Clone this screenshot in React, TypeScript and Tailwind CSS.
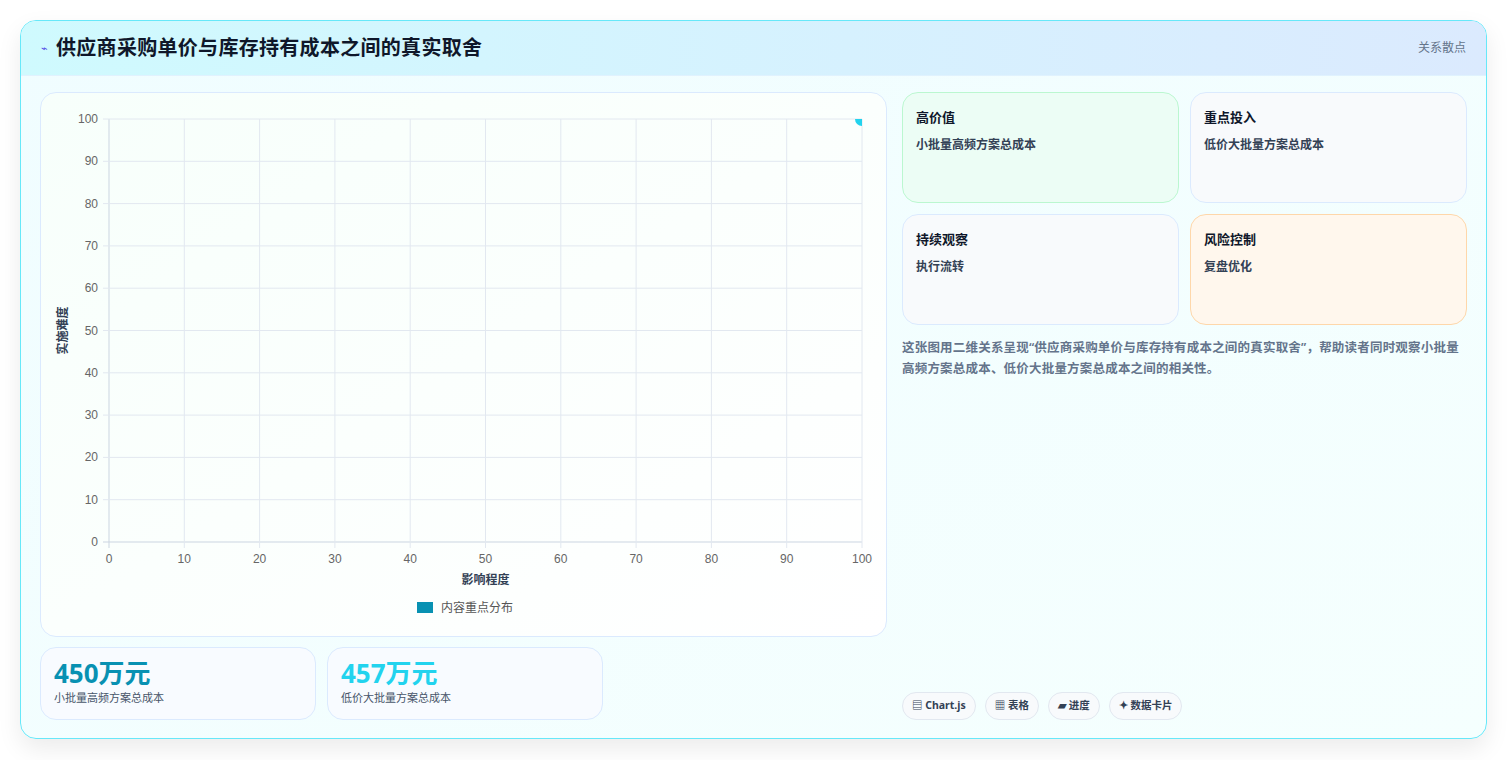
const W = 847;
const H = 543;
const x0 = 68, x1 = 821, y0 = 449, y1 = 26;
const ticks = [0, 10, 20, 30, 40, 50, 60, 70, 80, 90, 100];
const sx = (v: number) => x0 + ((x1 - x0) * v) / 100;
const sy = (v: number) => y0 - ((y0 - y1) * v) / 100;

function Chart() {
  return (
    <svg width={W} height={H} className="block" style={{ fontFamily: "'Liberation Sans', 'Noto Sans CJK SC', sans-serif" }}>
      <defs>
        <clipPath id="plot">
          <rect x={x0} y={y1} width={x1 - x0} height={y0 - y1} />
        </clipPath>
      </defs>
      {ticks.map((t) => (
        <g key={t}>
          <line x1={sx(t)} x2={sx(t)} y1={y1} y2={y0 + 6} stroke={t === 0 ? "#cbd5e1" : "#e2e8f0"} />
          <line x1={x0 - 6} x2={x1} y1={sy(t)} y2={sy(t)} stroke={t === 0 ? "#cbd5e1" : "#e2e8f0"} />
          <text x={sx(t)} y={470} fontSize="12" fill="#666" textAnchor="middle">{t}</text>
          <text x={57} y={sy(t) + 4} fontSize="12" fill="#666" textAnchor="end">{t}</text>
        </g>
      ))}
      <circle cx={sx(100)} cy={sy(100)} r={7} fill="#22d3ee" clipPath="url(#plot)" />
      <text x={(x0 + x1) / 2} y={491} fontSize="12" fontWeight="bold" fill="#334155" textAnchor="middle">影响程度</text>
      <text transform={`translate(26 ${(y0 + y1) / 2}) rotate(-90)`} fontSize="12" fontWeight="bold" fill="#334155" textAnchor="middle">实施难度</text>
      <rect x={376} y={509} width={16} height={11} fill="#0891b2" />
      <text x={400} y={519} fontSize="12" fill="#555">内容重点分布</text>
    </svg>
  );
}

const quads = [
  { t: "高价值", d: "小批量高频方案总成本", c: "bg-[#ecfdf5] border-[#bbf7d0]" },
  { t: "重点投入", d: "低价大批量方案总成本", c: "bg-[#f8fafc] border-[#dbeafe]" },
  { t: "持续观察", d: "执行流转", c: "bg-[#f8fafc] border-[#dbeafe]" },
  { t: "风险控制", d: "复盘优化", c: "bg-[#fff7ed] border-[#fed7aa]" },
];

const chips = ["▤ Chart.js", "▦ 表格", "▰ 进度", "✦ 数据卡片"];

export default function App() {
  return (
    <div className="min-h-[760px] bg-white p-5 pb-0" style={{ fontFamily: "'Noto Sans', 'Noto Sans CJK SC', sans-serif" }}>
      <div className="rounded-2xl border border-[#67e8f9] overflow-hidden bg-gradient-to-br from-[#f0fdff] to-[#f5fffe] shadow-[0_10px_25px_rgba(0,0,0,0.08)]">
        <div className="h-[55px] flex items-center justify-between px-5 bg-gradient-to-r from-[#cffafe] to-[#dbeafe] border-b border-[#e0f2fe]">
          <div className="flex items-center gap-2">
            <span className="text-[11px] text-[#4f46e5]">⌁</span>
            <h1 className="text-[20px] font-bold tracking-[0.3px] text-[#0f172a]">供应商采购单价与库存持有成本之间的真实取舍</h1>
          </div>
          <span className="text-[12px] text-[#64748b]">关系散点</span>
        </div>
        <div className="flex gap-[15px] p-[19px] pt-4 pb-[18px]">
          <div className="w-[847px] flex flex-col gap-[10px]">
            <div className="rounded-2xl border border-[#dbeafe] bg-gradient-to-br from-[#f7fffb] to-white">
              <Chart />
            </div>
            <div className="flex gap-[11px]">
              {[
                { v: "450万元", l: "小批量高频方案总成本", c: "text-[#0891b2]" },
                { v: "457万元", l: "低价大批量方案总成本", c: "text-[#22d3ee]" },
              ].map((s) => (
                <div key={s.v} className="w-[276px] h-[73px] rounded-2xl border border-[#dbeafe] bg-[#f8fbff] px-[13px] pt-[9px]">
                  <div className={`text-[26px] font-bold leading-[32px] ${s.c}`}>{s.v}</div>
                  <div className="text-[11px] text-[#475569] mt-[1px]">{s.l}</div>
                </div>
              ))}
            </div>
          </div>
          <div className="flex-1 flex flex-col">
            <div className="grid grid-cols-2 gap-[11px]">
              {quads.map((q) => (
                <div key={q.t} className={`h-[111px] rounded-2xl border px-[13px] pt-[15px] ${q.c}`}>
                  <div className="text-[13px] font-bold text-[#0f172a]">{q.t}</div>
                  <div className="text-[12px] font-semibold text-[#334155] mt-[8px]">{q.d}</div>
                </div>
              ))}
            </div>
            <p className="mt-[12px] text-[12.5px] font-semibold leading-[21px] tracking-[0.2px] text-[#64748b]">
              这张图用二维关系呈现“供应商采购单价与库存持有成本之间的真实取舍”，帮助读者同时观察小批量高频方案总成本、低价大批量方案总成本之间的相关性。
            </p>
            <div className="mt-auto flex gap-[9px]">
              {chips.map((c) => (
                <span key={c} className="h-[28px] px-[9px] flex items-center rounded-full border border-[#e2e8f0] bg-[#f8fafc] text-[10.5px] font-bold text-[#334155]">{c}</span>
              ))}
            </div>
          </div>
        </div>
      </div>
    </div>
  );
}
